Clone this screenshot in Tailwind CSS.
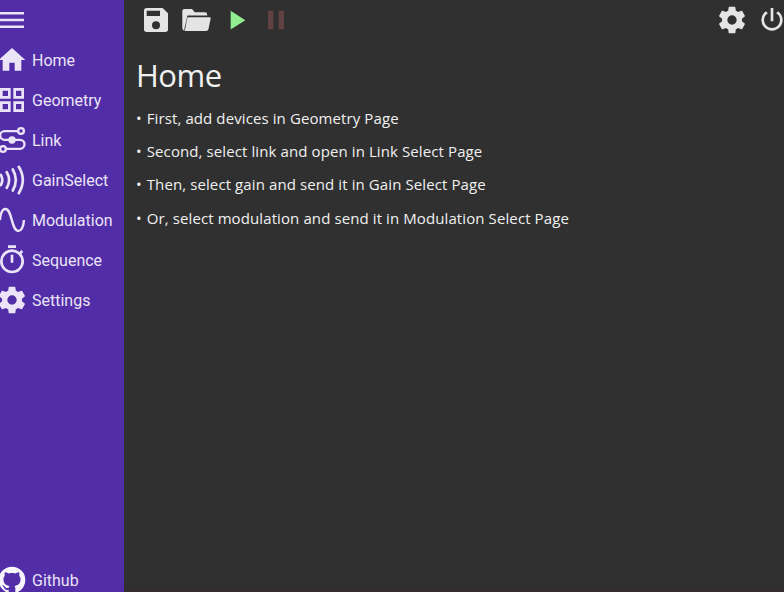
<!DOCTYPE html>
<html lang="en">
<head>
<meta charset="utf-8">
<title>Home</title>
<script src="https://cdn.jsdelivr.net/npm/@tailwindcss/browser@4"></script>
</head>
<body class="flex h-[592px] w-[784px] overflow-hidden bg-[#303030] text-[#f0f0f0]">
<nav class="flex h-full w-[124px] shrink-0 flex-col overflow-hidden bg-[#512da8] font-['Roboto',sans-serif] text-[16px] text-[#eae4f6]">
  <div class="flex h-10 shrink-0 items-center"><svg class="-ml-1 size-8 shrink-0" viewBox="0 0 32 32" fill="currentColor"><path d="M4 8h24v2.4H4zM4 14.8h24v2.4H4zM4 21.6h24V24H4z"/></svg></div>
  <a class="-ml-1 flex h-10 shrink-0 items-center gap-1"><svg class="size-8 shrink-0" viewBox="0 0 24 24" fill="currentColor"><path d="M10 20v-6h4v6h5v-8h3L12 3 2 12h3v8z"/></svg><span class="pt-0.5">Home</span></a>
  <a class="-ml-1 flex h-10 shrink-0 items-center gap-1"><svg class="size-8 shrink-0" viewBox="0 0 24 24" fill="currentColor"><path fill-rule="evenodd" d="M3 3h8v8H3zm2 2v4h4V5zm8-2h8v8h-8zm2 2v4h4V5zM3 13h8v8H3zm2 2v4h4v-4zm8-2h8v8h-8zm2 2v4h4v-4z"/></svg><span class="pt-0.5">Geometry</span></a>
  <a class="-ml-1 flex h-10 shrink-0 items-center gap-1"><svg class="size-8 shrink-0" viewBox="0 0 32 32" fill="none" stroke="currentColor" stroke-width="2.3"><circle cx="25" cy="7" r="2.900"/><circle cx="7" cy="25" r="2.900"/><path d="M22 7.2H8.500a4.300 4.300 0 0 0 0 8.600H24a4.500 4.500 0 0 1 0 9H10"/><circle cx="16" cy="16" r="3.7" fill="currentColor" stroke="none"/></svg><span class="pt-0.5">Link</span></a>
  <a class="-ml-1 flex h-10 shrink-0 items-center gap-1"><svg class="size-8 shrink-0" viewBox="0 0 32 32" fill="none" stroke="currentColor" stroke-width="2.7" stroke-linecap="round"><path d="M4.800 11q3 5 0 10M10.800 8.200q4.600 7.800 0 15.600M16.800 5.500q6 10.500 0 21M22.800 2.800q8 13.200 0 26.400"/></svg><span class="pt-0.5">GainSelect</span></a>
  <a class="-ml-1 flex h-10 shrink-0 items-center gap-1"><svg class="size-8 shrink-0" viewBox="0 0 32 32" fill="none" stroke="currentColor" stroke-width="2.500"><path d="M3.800 16C4.600 9 6.400 5.100 9.400 5.100C16.200 5.100 15.400 26.900 22.200 26.900C25.600 26.900 27.400 23 28 16"/></svg><span class="pt-0.5">Modulation</span></a>
  <a class="-ml-1 flex h-10 shrink-0 items-center gap-1"><svg class="size-8 shrink-0" viewBox="0 0 24 24" fill="currentColor"><path d="M12 20a7 7 0 0 1-7-7 7 7 0 0 1 7-7 7 7 0 0 1 7 7 7 7 0 0 1-7 7m7.030-12.610 1.420-1.420c-.45-.51-.9-.97-1.410-1.410L17.620 6A9 9 0 0 0 12 4a9 9 0 0 0-9 9 9 9 0 0 0 9 9 9 9 0 0 0 7.030-14.610M11 14h2V8h-2m4-7H9v2h6z"/></svg><span class="pt-0.5">Sequence</span></a>
  <a class="-ml-1 flex h-10 shrink-0 items-center gap-1"><svg class="size-8 shrink-0" viewBox="0 0 24 24" fill="currentColor"><path d="M12 15.5A3.5 3.5 0 0 1 8.5 12 3.5 3.5 0 0 1 12 8.500a3.500 3.500 0 0 1 3.500 3.500 3.500 3.500 0 0 1-3.500 3.500m7.430-2.530c.04-.32.07-.64.07-.97s-.03-.66-.07-1l2.110-1.630c.19-.15.24-.42.12-.64l-2-3.460c-.12-.22-.39-.31-.61-.22l-2.490 1c-.52-.39-1.060-.73-1.690-.98l-.37-2.650A.506.506 0 0 0 14 2h-4c-.25 0-.46.18-.5.42l-.37 2.650c-.63.25-1.170.59-1.690.98l-2.490-1c-.22-.09-.49 0-.61.22l-2 3.460c-.13.22-.07.49.12.64L4.570 11c-.04.34-.07.67-.07 1s.03.65.07.97l-2.110 1.660c-.19.15-.25.42-.12.64l2 3.460c.12.22.39.3.61.22l2.490-1.010c.52.4 1.060.74 1.690.99l.37 2.650c.04.24.25.42.5.42h4c.25 0 .46-.18.5-.42l.37-2.650c.63-.26 1.170-.59 1.690-.99l2.490 1.010c.22.08.49 0 .61-.22l2-3.460c.12-.22.07-.49-.12-.64z"/></svg><span class="pt-0.5">Settings</span></a>
  <a class="-mb-2 -ml-1 mt-auto flex h-10 shrink-0 items-center gap-1"><svg class="size-8 shrink-0 text-[#f8f5fd]" viewBox="0 0 24 24" fill="currentColor"><path d="M12 2A10 10 0 0 0 2 12c0 4.420 2.870 8.170 6.840 9.500.5.080.66-.23.66-.5v-1.690c-2.770.6-3.360-1.340-3.360-1.340-.46-1.160-1.110-1.470-1.110-1.470-.91-.62.07-.6.07-.6 1 .07 1.530 1.030 1.530 1.030.87 1.520 2.340 1.070 2.910.83.09-.65.35-1.090.63-1.340-2.220-.25-4.550-1.110-4.550-4.920 0-1.110.38-2 1.030-2.710-.1-.25-.45-1.290.1-2.640 0 0 .84-.27 2.750 1.020.79-.22 1.650-.33 2.500-.33s1.710.11 2.500.33c1.910-1.290 2.750-1.020 2.750-1.020.55 1.350.2 2.390.1 2.640.65.71 1.030 1.600 1.030 2.710 0 3.820-2.340 4.660-4.570 4.910.36.31.69.92.69 1.850V21c0 .27.16.59.67.5C19.140 20.160 22 16.420 22 12A10 10 0 0 0 12 2"/></svg><span class="pt-0.5">Github</span></a>
</nav>
<div class="flex min-w-0 flex-1 flex-col border-b-4 border-[#332c31]">
  <header class="flex h-10 shrink-0 items-center gap-2 overflow-hidden pl-4 text-[#e4e4e4]">
    <svg class="size-8 shrink-0" viewBox="0 0 24 24" fill="currentColor"><path d="M15 9H5V5h10m-3 14a3 3 0 0 1-3-3 3 3 0 0 1 3-3 3 3 0 0 1 3 3 3 3 0 0 1-3 3m5-16H5a2 2 0 0 0-2 2v14a2 2 0 0 0 2 2h14a2 2 0 0 0 2-2V7z"/></svg>
    <svg class="size-8 shrink-0" viewBox="0 0 32 32" fill="currentColor"><path d="M4.300 26.800Q2.300 26.200 2.300 24V7Q2.300 5 4.500 5H12l2.800 3.300H25q2.200 0 2.200 2.200v1H7.500L4.600 23.800Z"/><path d="M8.400 13.200H29.500q1.500 0 1.200 1.400L28.500 25q-.5 2-2.500 2H4.800L7.200 14.200q.2-1 1.200-1Z"/></svg>
    <svg class="size-8 shrink-0 text-[#90ee90]" viewBox="0 0 24 24" fill="currentColor"><path d="M8 5.140v14l11-7z"/></svg>
    <svg class="size-8 shrink-0 text-[#614344]" viewBox="0 0 24 24" fill="currentColor"><path d="M14 19h4V5h-4M6 19h4V5H6z"/></svg>
    <svg class="ml-auto size-8 shrink-0" viewBox="0 0 24 24" fill="currentColor"><path d="M12 15.5A3.5 3.5 0 0 1 8.5 12 3.5 3.5 0 0 1 12 8.500a3.500 3.500 0 0 1 3.500 3.500 3.500 3.500 0 0 1-3.500 3.500m7.430-2.530c.04-.32.07-.64.07-.97s-.03-.66-.07-1l2.110-1.630c.19-.15.24-.42.12-.64l-2-3.460c-.12-.22-.39-.31-.61-.22l-2.490 1c-.52-.39-1.060-.73-1.690-.98l-.37-2.650A.506.506 0 0 0 14 2h-4c-.25 0-.46.18-.5.42l-.37 2.650c-.63.25-1.170.59-1.690.98l-2.490-1c-.22-.09-.49 0-.61.22l-2 3.460c-.13.22-.07.49.12.64L4.570 11c-.04.34-.07.67-.07 1s.03.65.07.97l-2.110 1.660c-.19.15-.25.42-.12.64l2 3.460c.12.22.39.3.61.22l2.490-1.010c.52.4 1.060.74 1.690.99l.37 2.650c.04.24.25.42.5.42h4c.25 0 .46-.18.5-.42l.37-2.650c.63-.26 1.170-.59 1.690-.99l2.490 1.010c.22.08.49 0 .61-.22l2-3.460c.12-.22.07-.49-.12-.64z"/></svg>
    <svg class="-mr-1 size-8 shrink-0" viewBox="0 0 24 24" fill="currentColor"><path d="m16.560 5.440-1.450 1.450A5.970 5.970 0 0 1 18 12a6 6 0 0 1-6 6 6 6 0 0 1-6-6c0-2.170 1.160-4.060 2.880-5.120L7.440 5.440A7.960 7.960 0 0 0 4 12a8 8 0 0 0 8 8 8 8 0 0 0 8-8c0-2.720-1.360-5.120-3.440-6.560M13 3h-2v10h2"/></svg>
  </header>
  <main class="pl-3 pt-[13px] font-['Open_Sans','Noto_Sans',sans-serif]">
    <h1 class="h-[45px] text-[31px] leading-[44px] tracking-[-0.5px]">Home</h1>
    <ul class="mt-1 text-[15px] leading-[33px] tracking-[0.1px] whitespace-nowrap">
      <li><span class="mr-px">•</span> First, add devices in Geometry Page</li>
      <li><span class="mr-px">•</span> Second, select link and open in Link Select Page</li>
      <li><span class="mr-px">•</span> Then, select gain and send it in Gain Select Page</li>
      <li class="pt-px"><span class="mr-px">•</span> Or, select modulation and send it in Modulation Select Page</li>
    </ul>
  </main>
</div>
</body>
</html>
